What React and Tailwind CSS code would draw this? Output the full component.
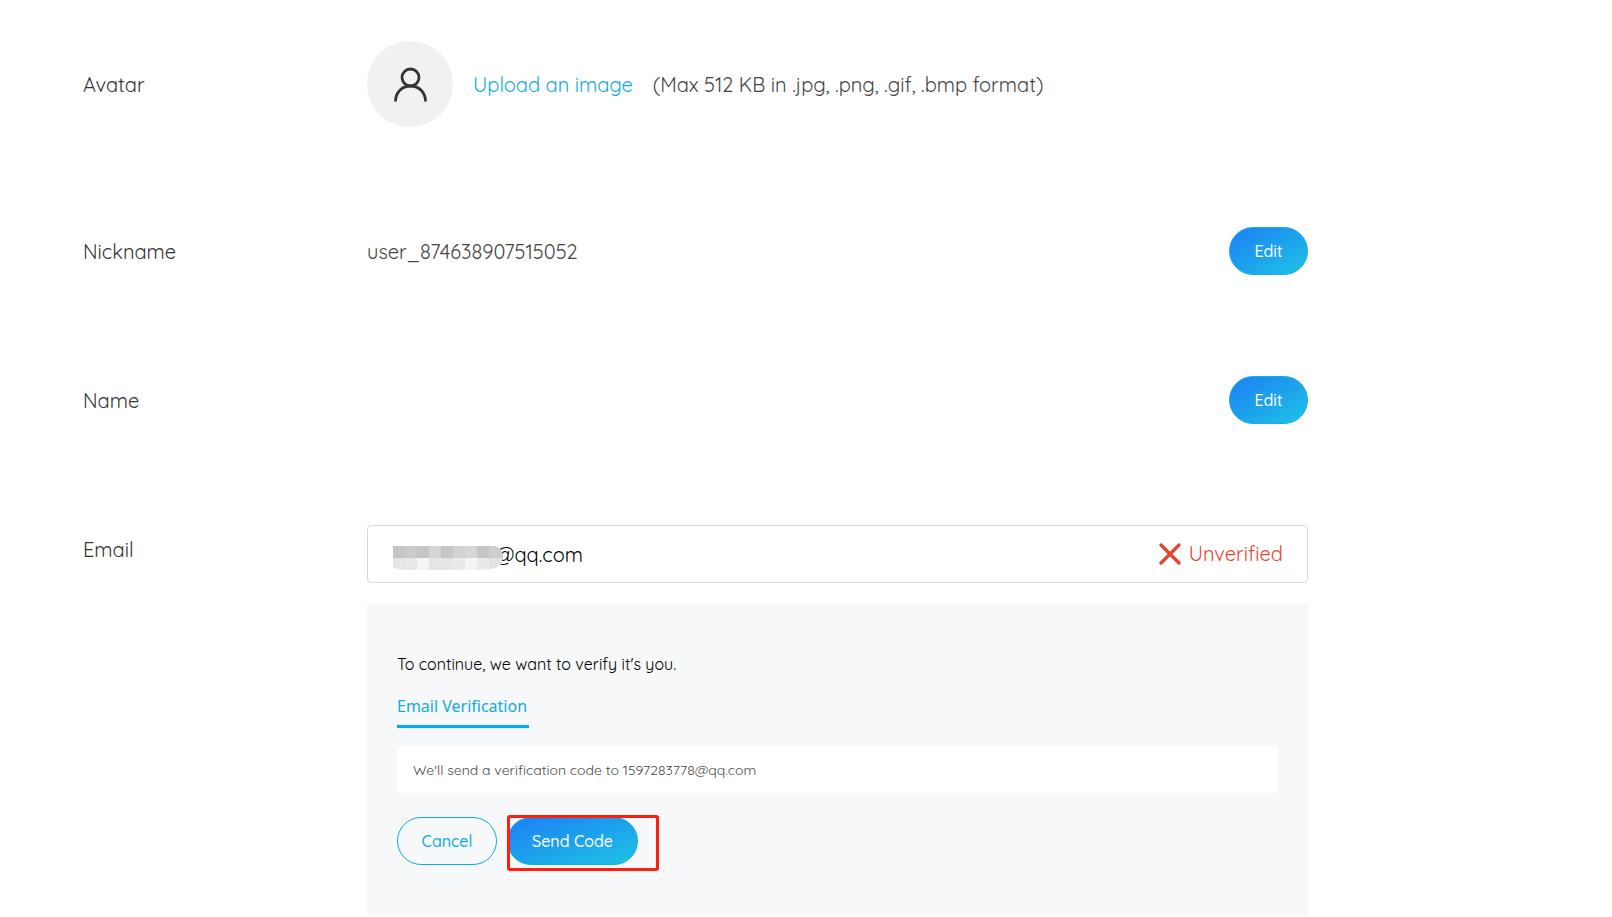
import React, { useState } from 'react';

const AvatarIcon = () => (
  <svg className="h-9 w-9" viewBox="0 0 36 36" fill="none" stroke="#333333" strokeWidth="2.8" aria-hidden="true">
    <circle cx="18.5" cy="11.5" r="8.5" />
    <path d="M3.5 35.5c0-8.5 6-15.5 15-15.5s15 7 15 15.5" />
  </svg>
);

const CrossIcon = () => (
  <svg className="h-[22px] w-[22px]" viewBox="0 0 22 22" fill="none" stroke="#e8432f" strokeWidth="3.2" strokeLinecap="round" aria-hidden="true">
    <path d="M2 2l18 18M20 2L2 20" />
  </svg>
);

const maskTop = ['#c5c5c4', '#cbcbca', '#c5c5c5', '#d4d5d8', '#c6c6c6', '#d2d2d2', '#d6d6d6', '#c5c5c4', '#cfcfcf'];
const maskBottom = ['#e6e6e5', '#e8e8e8', '#f5f5f5', '#e4e5e7', '#e4e5e7', '#e9e9e9', '#f4f4f4', '#e9e9e9', '#e2e2e3'];

// Hides the local part of the address
const MaskedName = () => (
  <svg className="relative z-10 mt-2 -mr-2 h-6 w-[110px] shrink-0" viewBox="0 0 110 24" aria-hidden="true">
    <clipPath id="mask-shape">
      <path d="M0 0H102Q110 2 110 12Q109 22 97 23L84 24H10L0 22Z" />
    </clipPath>
    <g clipPath="url(#mask-shape)" shapeRendering="crispEdges">
      {maskTop.map((color, i) => (
        <rect key={`top-${i}`} x={i * 12} y="0" width="14" height="12" fill={color} />
      ))}
      {maskBottom.map((color, i) => (
        <rect key={`bottom-${i}`} x={i * 12} y="12" width="14" height="12" fill={color} />
      ))}
    </g>
  </svg>
);

const GradientButton = ({ children, className }) => (
  <button
    type="button"
    className={`h-12 cursor-pointer rounded-full border border-[#14ade4] bg-linear-to-br/srgb from-[#1c7ff5] to-[#1ec4e4] text-base font-medium text-white ${className}`}
  >
    {children}
  </button>
);

const Row = ({ label, children }) => (
  <div className="flex h-12 items-center">
    <div className="w-[284px] shrink-0 pt-0.5 text-xl text-[#333333]">{label}</div>
    <div className="flex flex-1 items-center justify-between text-xl text-[#444444]">{children}</div>
  </div>
);

const VerifyPanel = () => (
  <section className="mt-5 bg-[#f6f8fa] px-[30px] pt-[49px] pb-[45px]">
    <p className="text-base leading-6 text-black">To continue, we want to verify it's you.</p>
    <div className="mt-[18px] flex" role="tablist">
      <button
        type="button"
        role="tab"
        aria-selected="true"
        className="h-[34px] cursor-pointer border-b-3 border-[#00aee6] pr-0.5 pb-[7px] font-['Noto_Sans',sans-serif] text-base leading-6 text-[#12abe0]"
      >
        Email Verification
      </button>
    </div>
    <p className="mt-[19px] bg-white px-4 py-3 text-sm leading-[22px] text-[#4a4a4a]">
      We'll send a verification code to 1597283778@qq.com
    </p>
    <div className="mt-[22px] mb-1 flex gap-2.5">
      <button type="button" className="my-0.5 h-12 w-[100px] cursor-pointer rounded-full border border-[#12abe0] text-base font-medium text-[#12abe0]">
        Cancel
      </button>
      <div className="relative w-[152px] py-0.5">
        <GradientButton className="w-[131px]">Send Code</GradientButton>
        <div className="pointer-events-none absolute inset-x-0 top-0 h-14 rounded-[3px] border-3 border-[#ff1f10]" />
      </div>
    </div>
  </section>
);

export default function App() {
  const [email, setEmail] = useState('@qq.com');

  return (
    <main className="w-full max-w-[1308px] bg-white pt-[41px] pl-[83px] font-['Quicksand','Lato',sans-serif]">
      <div className="flex items-center">
        <div className="w-[284px] shrink-0 pt-0.5 text-xl text-[#333333]">Avatar</div>
        <div className="flex items-center gap-5 text-xl">
          <div className="flex h-[86px] w-[86px] items-center justify-center rounded-full bg-[#f1f1f1]">
            <AvatarIcon />
          </div>
          <a href="#upload" className="pt-0.5 text-[#12abe0]">Upload an image</a>
          <span className="pt-0.5 text-[#444444]">(Max 512 KB in .jpg, .png, .gif, .bmp format)</span>
        </div>
      </div>

      <div className="mt-[100px] flex flex-col gap-[101px]">
        <Row label="Nickname">
          <span className="pt-0.5">user_874638907515052</span>
          <GradientButton className="w-[79px]">Edit</GradientButton>
        </Row>
        <Row label="Name">
          <span />
          <GradientButton className="w-[79px]">Edit</GradientButton>
        </Row>

        <div className="flex items-start">
          <label htmlFor="email" className="w-[284px] shrink-0 pt-[11px] text-xl text-[#333333]">Email</label>
          <div className="flex-1">
            <div className="flex h-[58px] items-center rounded border border-[#d9d9d9] pr-6 pl-[25px]">
              <MaskedName />
              <input
                id="email"
                type="text"
                value={email}
                onChange={(e) => setEmail(e.target.value)}
                className="min-w-0 flex-1 bg-transparent pt-0.5 text-xl text-black outline-none"
              />
              <div className="flex items-center gap-2 text-xl text-[#e8432f]">
                <CrossIcon />
                <span>Unverified</span>
              </div>
            </div>
            <VerifyPanel />
          </div>
        </div>
      </div>
    </main>
  );
}
